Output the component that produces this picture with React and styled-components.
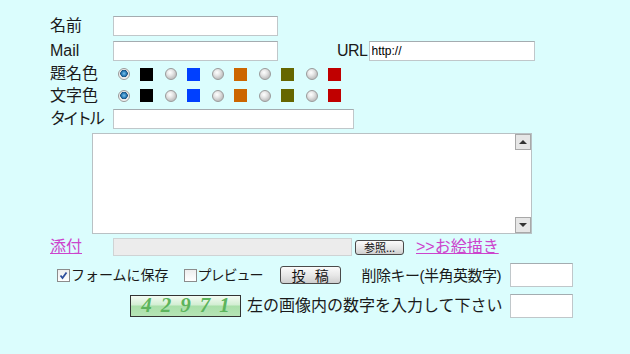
import React from 'react';
import styled, { createGlobalStyle } from 'styled-components';

const GlobalStyle = createGlobalStyle`
  body {
    margin: 0;
    background: #dbfdfd;
    font-family: "Liberation Sans", "Noto Sans CJK JP", sans-serif;
    color: #1a1a1a;
  }
`;

const Form = styled.form`
  width: 630px;
  height: 354px;
  box-sizing: border-box;
  padding: 14px 0 0 50px;
  display: flex;
  flex-direction: column;
`;

const Row = styled.div`
  display: flex;
  align-items: center;
  height: ${p => p.h}px;
  padding-left: ${p => p.indent || 0}px;
  width: ${p => (p.wide ? '523px' : 'auto')};
  box-sizing: border-box;
`;

const Label = styled.span`
  width: 63px;
  flex-shrink: 0;
  font-size: 16px;
  line-height: 1;
  white-space: nowrap;
  letter-spacing: ${p => p.ls || 0}px;
`;

const Text = styled.span`
  font-size: ${p => p.size || 16}px;
  line-height: 1;
  margin-left: ${p => p.ml || 0}px;
  letter-spacing: ${p => p.ls || 0}px;
  white-space: nowrap;
`;

const TextInput = styled.input`
  box-sizing: border-box;
  width: ${p => p.w}px;
  height: ${p => p.ht || 20}px;
  margin: 0 0 0 ${p => p.ml || 0}px;
  ${p => p.auto && 'margin-left: auto;'}
  border: 1px solid #c0c7ca;
  border-top-color: #a4acb0;
  background: #fff;
  padding: 0 2px;
  font: 12px "Liberation Sans", sans-serif;
  color: #000;
  outline: none;
`;

const Radio = styled.span`
  width: 12px;
  height: 12px;
  box-sizing: border-box;
  border-radius: 50%;
  border: 1px solid #9a9a9a;
  margin-left: ${p => p.ml}px;
  flex-shrink: 0;
  background: ${p =>
    p.checked
      ? 'radial-gradient(circle at 50% 45%, #7ec4ee 0, #2678b4 2.5px, #1b4f7a 3.5px, #e8e8e8 4px, #fdfdfd 6px)'
      : 'radial-gradient(circle at 40% 35%, #ffffff 0, #e6e6e6 3px, #c4c4c4 6px)'};
`;

const Swatch = styled.span`
  width: 13px;
  height: 13px;
  margin-left: 10px;
  background: ${p => p.color};
  flex-shrink: 0;
`;

const MemoBox = styled.div`
  display: flex;
  width: 440px;
  height: 101px;
  margin: 2px 0 2px 42px;
  box-sizing: border-box;
  border: 1px solid #b9c1c4;
  background: #fff;
`;

const Memo = styled.textarea`
  flex: 1;
  border: none;
  resize: none;
  outline: none;
  background: transparent;
`;

const ScrollTrack = styled.div`
  width: 16px;
  display: flex;
  flex-direction: column;
  justify-content: space-between;
`;

const ScrollButton = styled.div`
  width: 16px;
  height: 16px;
  box-sizing: border-box;
  border: 1px solid #a8a8a8;
  background: #e6e6e6;
  display: flex;
  align-items: center;
  justify-content: center;
`;

const Arrow = styled.span`
  width: 0;
  height: 0;
  border-left: 4px solid transparent;
  border-right: 4px solid transparent;
  ${p => (p.down ? 'border-top: 4px solid #333;' : 'border-bottom: 4px solid #333;')}
`;

const Link = styled.a`
  color: #cc44cc;
  text-decoration: underline;
  font-size: 16px;
  line-height: 1.15;
  margin-left: ${p => p.ml || 0}px;
  width: ${p => (p.w ? `${p.w}px` : 'auto')};
  flex-shrink: 0;
  cursor: pointer;
`;

const FileBox = styled.div`
  width: 239px;
  height: 18px;
  box-sizing: border-box;
  border: 1px solid #cfd3d4;
  background: #ececec;
`;

const Button = styled.button`
  box-sizing: border-box;
  width: ${p => p.w}px;
  height: ${p => p.ht}px;
  margin-left: ${p => p.ml || 0}px;
  padding: 0;
  border: 1px solid #4a4a4a;
  border-radius: 3px;
  background: linear-gradient(#fbfbfb, #e6e6e6 55%, #cfcfcf);
  font-family: "Noto Sans CJK JP", sans-serif;
  font-size: ${p => p.size}px;
  line-height: 1;
  word-spacing: ${p => p.ws || 0}px;
  color: #111;
  display: flex;
  align-items: center;
  justify-content: center;
  white-space: pre;
`;

const Check = styled.span`
  width: 13px;
  height: 13px;
  box-sizing: border-box;
  border: 1px solid #8c8c8c;
  background: linear-gradient(#eeeeee, #ffffff);
  margin-left: ${p => p.ml || 0}px;
  flex-shrink: 0;
  display: flex;
  align-items: center;
  justify-content: center;
`;

const Captcha = styled.div`
  width: 111px;
  height: 22px;
  box-sizing: border-box;
  border: 1px solid #333;
  background: linear-gradient(#f4fbf4 0, #d2eed2 45%, #a9dfa9 50%, #b6e4b6 100%);
  display: flex;
  align-items: center;
  justify-content: center;
  font-family: "Liberation Serif", serif;
  font-style: italic;
  font-weight: bold;
  font-size: 21px;
  letter-spacing: 9px;
  padding-left: 9px;
  color: #5cb45c;
  overflow: hidden;
`;

const colors = ['#000000', '#0040ff', '#cc6600', '#666600', '#c00000'];

const ColorRow = ({ label, h }) => (
  <Row h={h}>
    <Label>{label}</Label>
    {colors.map((c, i) => (
      <React.Fragment key={c}>
        <Radio checked={i === 0} ml={i === 0 ? 5 : 12} />
        <Swatch color={c} />
      </React.Fragment>
    ))}
  </Row>
);

const Tick = () => (
  <svg width="9" height="9" viewBox="0 0 9 9">
    <path d="M1.5 4.5 L3.5 7 L7.5 1.5" fill="none" stroke="#2e4e9c" strokeWidth="1.8" />
  </svg>
);

export default function App() {
  return (
    <>
      <GlobalStyle />
      <Form>
        <Row h={24}>
          <Label>名前</Label>
          <TextInput w={165} />
        </Row>
        <Row h={25}>
          <Label>Mail</Label>
          <TextInput w={165} />
          <Text ml={59} ls={-0.5}>URL</Text>
          <TextInput w={166} ml={1} defaultValue="http://" />
        </Row>
        <ColorRow label="題名色" h={22} />
        <ColorRow label="文字色" h={21} />
        <Row h={25}>
          <Label ls={-3}>タイトル</Label>
          <TextInput w={241} />
        </Row>
        <MemoBox>
          <Memo />
          <ScrollTrack>
            <ScrollButton><Arrow /></ScrollButton>
            <ScrollButton><Arrow down /></ScrollButton>
          </ScrollTrack>
        </MemoBox>
        <Row h={22}>
          <Link w={63}>添付</Link>
          <FileBox />
          <Button w={49} ht={15} size={11} ml={3}>参照...</Button>
          <Link ml={12}>&gt;&gt;お絵描き</Link>
        </Row>
        <Row h={34} indent={7} wide>
          <Check><Tick /></Check>
          <Text size={14} ml={1}>フォームに保存</Text>
          <Check ml={15} />
          <Text size={14} ml={1} ls={-1}>プレビュー</Text>
          <Button w={61} ht={18} size={14} ml={17} ws={6}>投 稿</Button>
          <Text size={15} ml={21} ls={-0.5}>削除キー(半角英数字)</Text>
          <TextInput w={63} ht={24} auto />
        </Row>
        <Row h={27} indent={80} wide>
          <Captcha>42971</Captcha>
          <Text ml={6}>左の画像内の数字を入力して下さい</Text>
          <TextInput w={63} ht={24} auto />
        </Row>
      </Form>
    </>
  );
}
